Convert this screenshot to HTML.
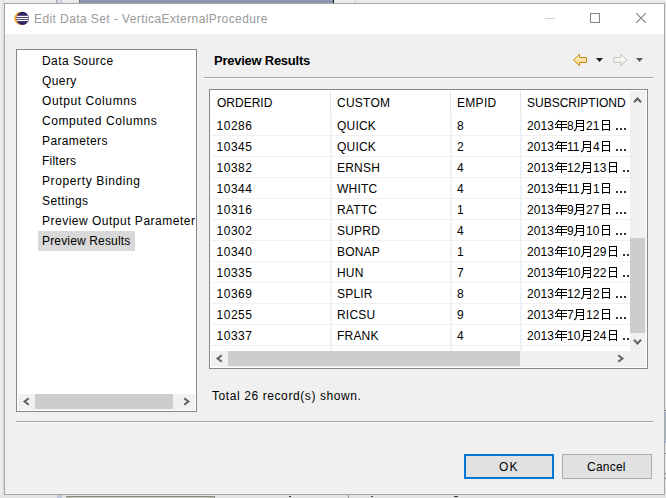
<!DOCTYPE html>
<html><head><meta charset="utf-8">
<style>
*{margin:0;padding:0;box-sizing:border-box}
html,body{width:666px;height:498px;overflow:hidden;background:#e9e9e9;font-family:"Liberation Sans",sans-serif;font-size:12px;color:#000}
.a{position:absolute}
.t{position:absolute;white-space:pre;line-height:14px;font-size:12px;color:#000}
svg{position:absolute;overflow:visible}
</style></head><body>
<div class="a" style="left:0px;top:0px;width:666px;height:3px;background:#eaeaea;"></div>
<div class="a" style="left:56px;top:0px;width:6px;height:3px;background:#d2dae8;border-left:1px solid #a8a8a8;border-right:1px solid #c8c8c8;"></div>
<div class="a" style="left:79px;top:0px;width:254px;height:3px;background:#8b97b3;border-left:1px solid #777;"></div>
<div class="a" style="left:333px;top:0px;width:1px;height:3px;background:#111;"></div>
<div class="a" style="left:355px;top:0px;width:1px;height:3px;background:#b8cde0;"></div>
<div class="a" style="left:0px;top:0px;width:4px;height:498px;background:linear-gradient(to right,#f2f2f2,#dcdcdc);"></div>
<div class="a" style="left:665px;top:0px;width:1px;height:498px;background:#e6e6e6;"></div>
<div class="a" style="left:665px;top:410px;width:1px;height:1px;background:#666;"></div>
<div class="a" style="left:665px;top:412px;width:1px;height:31px;background:#aab4c8;"></div>
<div class="a" style="left:665px;top:453px;width:1px;height:1px;background:#777;"></div>
<div class="a" style="left:665px;top:473px;width:1px;height:1px;background:#777;"></div>
<div class="a" style="left:665px;top:478px;width:1px;height:1px;background:#777;"></div>
<div class="a" style="left:0px;top:495px;width:666px;height:3px;background:#e4e4e4;"></div>
<div class="a" style="left:57px;top:495px;width:5px;height:3px;background:#c0c8dc;"></div>
<div class="a" style="left:66px;top:496px;width:149px;height:2px;background:#c4c4b6;border-top:1px solid #8a8a8a;border-right:1px solid #8a8a8a;"></div>
<div class="a" style="left:289px;top:496px;width:2px;height:1px;background:#333;"></div>
<div class="a" style="left:348px;top:495px;width:1px;height:3px;background:#999;"></div>
<div class="a" style="left:371px;top:496px;width:2px;height:1px;background:#444;"></div>
<div class="a" style="left:454px;top:496px;width:4px;height:1px;background:#333;"></div>
<div class="a" style="left:4px;top:3px;width:661px;height:492px;background:#f0f0f0;border:1px solid #a6a6a6;"></div>
<div class="a" style="left:5px;top:4px;width:659px;height:30px;background:#ffffff;"></div>
<svg style="left:14px;top:11px" width="16" height="15" viewBox="0 0 16 15">
<ellipse cx="7.2" cy="7.4" rx="6.9" ry="6.6" fill="#f7a12a"/>
<ellipse cx="8.6" cy="7.4" rx="6.3" ry="6.6" fill="#2f2461"/>
<rect x="2.6" y="4.8" width="11.6" height="1.2" fill="#fff"/>
<rect x="2.4" y="6.9" width="12.2" height="1.2" fill="#fff"/>
<rect x="2.6" y="8.9" width="11.6" height="1.2" fill="#fff"/>
</svg>
<div class="t" style="left:34px;top:12px;color:#999;letter-spacing:0.41px">Edit Data Set - VerticaExternalProcedure</div>
<div class="a" style="left:545px;top:18px;width:10px;height:1px;background:#cfcfcf;"></div>
<div class="a" style="left:590px;top:13px;width:10px;height:10px;background:transparent;border:1px solid #858585;"></div>
<svg style="left:636px;top:13px" width="10" height="10" viewBox="0 0 10 10"><path d="M0.2 0.2L9.8 9.8M9.8 0.2L0.2 9.8" stroke="#808080" stroke-width="1.1" fill="none"/></svg>
<div class="a" style="left:16px;top:49px;width:181px;height:363px;background:#fff;border:1px solid #828790;"></div>
<div class="a" style="left:38px;top:231px;width:97px;height:20px;background:#d9d9d9;"></div>
<div class="a" style="left:17px;top:50px;width:178px;height:344px;overflow:hidden">
<div class="t" style="left:25px;top:4px;letter-spacing:0.44px">Data Source</div>
<div class="t" style="left:25px;top:24px;letter-spacing:0.4px">Query</div>
<div class="t" style="left:25px;top:44px;letter-spacing:0.6px">Output Columns</div>
<div class="t" style="left:25px;top:64px;letter-spacing:0.58px">Computed Columns</div>
<div class="t" style="left:25px;top:84px;letter-spacing:0.38px">Parameters</div>
<div class="t" style="left:25px;top:104px;letter-spacing:0.23px">Filters</div>
<div class="t" style="left:25px;top:124px;letter-spacing:0.62px">Property Binding</div>
<div class="t" style="left:25px;top:144px;letter-spacing:0.39px">Settings</div>
<div class="t" style="left:25px;top:164px;letter-spacing:0.5px">Preview Output Parameters</div>
<div class="t" style="left:25px;top:184px;letter-spacing:0.16px">Preview Results</div>
</div>
<div class="a" style="left:18px;top:394px;width:177px;height:16px;background:#f0f0f0;"></div>
<div class="a" style="left:35px;top:394px;width:138px;height:15px;background:#cdcdcd;"></div>
<svg style="left:22px;top:397px" width="9" height="9" viewBox="0 0 9 9"><path d="M6.8 1.3L2.6 4.5L6.8 7.7" stroke="#606060" stroke-width="2" fill="none"/></svg>
<svg style="left:183px;top:397px" width="9" height="9" viewBox="0 0 9 9"><path d="M1.2 1.3L5.4 4.5L1.2 7.7" stroke="#606060" stroke-width="2" fill="none"/></svg>
<div class="t" style="left:214px;top:54px;font-weight:bold;font-size:13px;letter-spacing:-0.25px">Preview Results</div>
<div class="a" style="left:204px;top:77px;width:449px;height:1px;background:#a0a0a0;"></div>
<div class="a" style="left:204px;top:78px;width:449px;height:1px;background:#ffffff;"></div>
<svg style="left:572px;top:53px" width="17" height="14" viewBox="0 0 17 14">
<defs><linearGradient id="gy" x1="0" y1="0" x2="0" y2="1"><stop offset="0" stop-color="#fff8dc"/><stop offset="1" stop-color="#f3cf6e"/></linearGradient></defs>
<path d="M1.5 7L7.5 1.3V4.5H14.6V9.5H7.5V12.7Z" fill="url(#gy)" stroke="#c28a1a" stroke-width="1" stroke-linejoin="round"/>
</svg>
<svg style="left:596px;top:58px" width="8" height="5" viewBox="0 0 8 5"><path d="M0 0H7L3.5 4Z" fill="#1e1e1e"/></svg>
<svg style="left:612px;top:53px" width="17" height="14" viewBox="0 0 17 14">
<defs><linearGradient id="gg" x1="0" y1="0" x2="0" y2="1"><stop offset="0" stop-color="#ffffff"/><stop offset="1" stop-color="#e8e8de"/></linearGradient></defs>
<path d="M15 7L9 1.3V4.5H1.9V9.5H9V12.7Z" fill="url(#gg)" stroke="#c4c4ba" stroke-width="1" stroke-linejoin="round"/>
</svg>
<svg style="left:636px;top:58px" width="8" height="5" viewBox="0 0 8 5"><path d="M0 0H7L3.5 4Z" fill="#5a5a5a"/></svg>
<div class="a" style="left:209px;top:89px;width:439px;height:280px;background:#fff;border:1px solid #828790;"></div>
<div class="a" style="left:330px;top:91px;width:1px;height:24px;background:#e5e5e5;"></div>
<div class="a" style="left:450px;top:91px;width:1px;height:24px;background:#e5e5e5;"></div>
<div class="a" style="left:520px;top:91px;width:1px;height:24px;background:#e5e5e5;"></div>
<div class="t" style="left:217px;top:96px;letter-spacing:0px">ORDERID</div>
<div class="t" style="left:337px;top:96px;letter-spacing:0.24px">CUSTOM</div>
<div class="t" style="left:457px;top:96px;letter-spacing:0.3px">EMPID</div>
<div class="t" style="left:527px;top:96px;letter-spacing:0px">SUBSCRIPTIOND</div>
<div class="a" style="left:211px;top:115px;width:419px;height:236px;overflow:hidden">
<div class="a" style="left:0;top:20px;width:419px;height:1px;background:#f0f0f0"></div>
<div class="a" style="left:0;top:41px;width:419px;height:1px;background:#f0f0f0"></div>
<div class="a" style="left:0;top:62px;width:419px;height:1px;background:#f0f0f0"></div>
<div class="a" style="left:0;top:83px;width:419px;height:1px;background:#f0f0f0"></div>
<div class="a" style="left:0;top:104px;width:419px;height:1px;background:#f0f0f0"></div>
<div class="a" style="left:0;top:125px;width:419px;height:1px;background:#f0f0f0"></div>
<div class="a" style="left:0;top:146px;width:419px;height:1px;background:#f0f0f0"></div>
<div class="a" style="left:0;top:167px;width:419px;height:1px;background:#f0f0f0"></div>
<div class="a" style="left:0;top:188px;width:419px;height:1px;background:#f0f0f0"></div>
<div class="a" style="left:0;top:209px;width:419px;height:1px;background:#f0f0f0"></div>
<div class="a" style="left:0;top:230px;width:419px;height:1px;background:#f0f0f0"></div>
<div class="a" style="left:0;top:251px;width:419px;height:1px;background:#f0f0f0"></div>
<div class="a" style="left:119px;top:0;width:1px;height:236px;background:#ecf2fb"></div>
<div class="a" style="left:120px;top:0;width:1px;height:236px;background:#f1f1f1"></div>
<div class="a" style="left:239px;top:0;width:1px;height:236px;background:#ecf2fb"></div>
<div class="a" style="left:240px;top:0;width:1px;height:236px;background:#f1f1f1"></div>
<div class="a" style="left:309px;top:0;width:1px;height:236px;background:#ecf2fb"></div>
<div class="a" style="left:310px;top:0;width:1px;height:236px;background:#f1f1f1"></div>
<div class="t" style="left:5.6px;top:4px;letter-spacing:0.5px">10286</div>
<div class="t" style="left:126px;top:4px;letter-spacing:0.2px">QUICK</div>
<div class="t" style="left:246px;top:4px">8</div>
<div class="a" style="left:309px;top:0;width:110px;height:236px;overflow:hidden">
<div class="t" style="left:7px;top:4px;letter-spacing:0.1px">2013</div>
<svg style="left:33px;top:4px" width="15" height="13" viewBox="0 0 15 13"><path d="M5 2.5H14M4 5.5H14M4.5 5V9M2 8.5H14M8.5 2V12" stroke="#000" stroke-width="1" fill="none" shape-rendering="crispEdges"/><path d="M5.9 1L2.3 5.9" stroke="#000" stroke-width="1.1" fill="none"/></svg>
<div class="t" style="left:47px;top:4px">8</div>
<svg style="left:53px;top:4px" width="15" height="13" viewBox="0 0 15 13"><path d="M3 1.5H11M10.5 1V12M7 11.5H11M3 4.5H11M3 7.5H11" stroke="#000" stroke-width="1" fill="none" shape-rendering="crispEdges"/><path d="M3.5 1V8Q3.5 10.5 1 12" stroke="#000" stroke-width="1.1" fill="none"/></svg>
<div class="t" style="left:66px;top:4px">21</div>
<svg style="left:79px;top:4px" width="15" height="13" viewBox="0 0 15 13"><path d="M3.5 1V12M10.5 1V12M3 1.5H11M3 5.5H11M3 10.5H11" stroke="#000" stroke-width="1" fill="none" shape-rendering="crispEdges"/></svg>
<div class="a" style="left:96px;top:13px;width:2px;height:2px;background:#333"></div>
<div class="a" style="left:100px;top:13px;width:2px;height:2px;background:#333"></div>
<div class="a" style="left:104px;top:13px;width:2px;height:2px;background:#333"></div>
</div>
<div class="t" style="left:5.6px;top:25px;letter-spacing:0.5px">10345</div>
<div class="t" style="left:126px;top:25px;letter-spacing:0.2px">QUICK</div>
<div class="t" style="left:246px;top:25px">2</div>
<div class="a" style="left:309px;top:0;width:110px;height:236px;overflow:hidden">
<div class="t" style="left:7px;top:25px;letter-spacing:0.1px">2013</div>
<svg style="left:33px;top:25px" width="15" height="13" viewBox="0 0 15 13"><path d="M5 2.5H14M4 5.5H14M4.5 5V9M2 8.5H14M8.5 2V12" stroke="#000" stroke-width="1" fill="none" shape-rendering="crispEdges"/><path d="M5.9 1L2.3 5.9" stroke="#000" stroke-width="1.1" fill="none"/></svg>
<div class="t" style="left:47px;top:25px">11</div>
<svg style="left:60px;top:25px" width="15" height="13" viewBox="0 0 15 13"><path d="M3 1.5H11M10.5 1V12M7 11.5H11M3 4.5H11M3 7.5H11" stroke="#000" stroke-width="1" fill="none" shape-rendering="crispEdges"/><path d="M3.5 1V8Q3.5 10.5 1 12" stroke="#000" stroke-width="1.1" fill="none"/></svg>
<div class="t" style="left:73px;top:25px">4</div>
<svg style="left:79px;top:25px" width="15" height="13" viewBox="0 0 15 13"><path d="M3.5 1V12M10.5 1V12M3 1.5H11M3 5.5H11M3 10.5H11" stroke="#000" stroke-width="1" fill="none" shape-rendering="crispEdges"/></svg>
<div class="a" style="left:96px;top:34px;width:2px;height:2px;background:#333"></div>
<div class="a" style="left:100px;top:34px;width:2px;height:2px;background:#333"></div>
<div class="a" style="left:104px;top:34px;width:2px;height:2px;background:#333"></div>
</div>
<div class="t" style="left:5.6px;top:46px;letter-spacing:0.5px">10382</div>
<div class="t" style="left:126px;top:46px;letter-spacing:0.2px">ERNSH</div>
<div class="t" style="left:246px;top:46px">4</div>
<div class="a" style="left:309px;top:0;width:110px;height:236px;overflow:hidden">
<div class="t" style="left:7px;top:46px;letter-spacing:0.1px">2013</div>
<svg style="left:33px;top:46px" width="15" height="13" viewBox="0 0 15 13"><path d="M5 2.5H14M4 5.5H14M4.5 5V9M2 8.5H14M8.5 2V12" stroke="#000" stroke-width="1" fill="none" shape-rendering="crispEdges"/><path d="M5.9 1L2.3 5.9" stroke="#000" stroke-width="1.1" fill="none"/></svg>
<div class="t" style="left:47px;top:46px">12</div>
<svg style="left:60px;top:46px" width="15" height="13" viewBox="0 0 15 13"><path d="M3 1.5H11M10.5 1V12M7 11.5H11M3 4.5H11M3 7.5H11" stroke="#000" stroke-width="1" fill="none" shape-rendering="crispEdges"/><path d="M3.5 1V8Q3.5 10.5 1 12" stroke="#000" stroke-width="1.1" fill="none"/></svg>
<div class="t" style="left:73px;top:46px">13</div>
<svg style="left:86px;top:46px" width="15" height="13" viewBox="0 0 15 13"><path d="M3.5 1V12M10.5 1V12M3 1.5H11M3 5.5H11M3 10.5H11" stroke="#000" stroke-width="1" fill="none" shape-rendering="crispEdges"/></svg>
<div class="a" style="left:103px;top:55px;width:2px;height:2px;background:#333"></div>
<div class="a" style="left:107px;top:55px;width:2px;height:2px;background:#333"></div>
<div class="a" style="left:110px;top:55px;width:2px;height:2px;background:#333"></div>
</div>
<div class="t" style="left:5.6px;top:67px;letter-spacing:0.5px">10344</div>
<div class="t" style="left:126px;top:67px;letter-spacing:0.2px">WHITC</div>
<div class="t" style="left:246px;top:67px">4</div>
<div class="a" style="left:309px;top:0;width:110px;height:236px;overflow:hidden">
<div class="t" style="left:7px;top:67px;letter-spacing:0.1px">2013</div>
<svg style="left:33px;top:67px" width="15" height="13" viewBox="0 0 15 13"><path d="M5 2.5H14M4 5.5H14M4.5 5V9M2 8.5H14M8.5 2V12" stroke="#000" stroke-width="1" fill="none" shape-rendering="crispEdges"/><path d="M5.9 1L2.3 5.9" stroke="#000" stroke-width="1.1" fill="none"/></svg>
<div class="t" style="left:47px;top:67px">11</div>
<svg style="left:60px;top:67px" width="15" height="13" viewBox="0 0 15 13"><path d="M3 1.5H11M10.5 1V12M7 11.5H11M3 4.5H11M3 7.5H11" stroke="#000" stroke-width="1" fill="none" shape-rendering="crispEdges"/><path d="M3.5 1V8Q3.5 10.5 1 12" stroke="#000" stroke-width="1.1" fill="none"/></svg>
<div class="t" style="left:73px;top:67px">1</div>
<svg style="left:79px;top:67px" width="15" height="13" viewBox="0 0 15 13"><path d="M3.5 1V12M10.5 1V12M3 1.5H11M3 5.5H11M3 10.5H11" stroke="#000" stroke-width="1" fill="none" shape-rendering="crispEdges"/></svg>
<div class="a" style="left:96px;top:76px;width:2px;height:2px;background:#333"></div>
<div class="a" style="left:100px;top:76px;width:2px;height:2px;background:#333"></div>
<div class="a" style="left:104px;top:76px;width:2px;height:2px;background:#333"></div>
</div>
<div class="t" style="left:5.6px;top:88px;letter-spacing:0.5px">10316</div>
<div class="t" style="left:126px;top:88px;letter-spacing:0.2px">RATTC</div>
<div class="t" style="left:246px;top:88px">1</div>
<div class="a" style="left:309px;top:0;width:110px;height:236px;overflow:hidden">
<div class="t" style="left:7px;top:88px;letter-spacing:0.1px">2013</div>
<svg style="left:33px;top:88px" width="15" height="13" viewBox="0 0 15 13"><path d="M5 2.5H14M4 5.5H14M4.5 5V9M2 8.5H14M8.5 2V12" stroke="#000" stroke-width="1" fill="none" shape-rendering="crispEdges"/><path d="M5.9 1L2.3 5.9" stroke="#000" stroke-width="1.1" fill="none"/></svg>
<div class="t" style="left:47px;top:88px">9</div>
<svg style="left:53px;top:88px" width="15" height="13" viewBox="0 0 15 13"><path d="M3 1.5H11M10.5 1V12M7 11.5H11M3 4.5H11M3 7.5H11" stroke="#000" stroke-width="1" fill="none" shape-rendering="crispEdges"/><path d="M3.5 1V8Q3.5 10.5 1 12" stroke="#000" stroke-width="1.1" fill="none"/></svg>
<div class="t" style="left:66px;top:88px">27</div>
<svg style="left:79px;top:88px" width="15" height="13" viewBox="0 0 15 13"><path d="M3.5 1V12M10.5 1V12M3 1.5H11M3 5.5H11M3 10.5H11" stroke="#000" stroke-width="1" fill="none" shape-rendering="crispEdges"/></svg>
<div class="a" style="left:96px;top:97px;width:2px;height:2px;background:#333"></div>
<div class="a" style="left:100px;top:97px;width:2px;height:2px;background:#333"></div>
<div class="a" style="left:104px;top:97px;width:2px;height:2px;background:#333"></div>
</div>
<div class="t" style="left:5.6px;top:109px;letter-spacing:0.5px">10302</div>
<div class="t" style="left:126px;top:109px;letter-spacing:0.2px">SUPRD</div>
<div class="t" style="left:246px;top:109px">4</div>
<div class="a" style="left:309px;top:0;width:110px;height:236px;overflow:hidden">
<div class="t" style="left:7px;top:109px;letter-spacing:0.1px">2013</div>
<svg style="left:33px;top:109px" width="15" height="13" viewBox="0 0 15 13"><path d="M5 2.5H14M4 5.5H14M4.5 5V9M2 8.5H14M8.5 2V12" stroke="#000" stroke-width="1" fill="none" shape-rendering="crispEdges"/><path d="M5.9 1L2.3 5.9" stroke="#000" stroke-width="1.1" fill="none"/></svg>
<div class="t" style="left:47px;top:109px">9</div>
<svg style="left:53px;top:109px" width="15" height="13" viewBox="0 0 15 13"><path d="M3 1.5H11M10.5 1V12M7 11.5H11M3 4.5H11M3 7.5H11" stroke="#000" stroke-width="1" fill="none" shape-rendering="crispEdges"/><path d="M3.5 1V8Q3.5 10.5 1 12" stroke="#000" stroke-width="1.1" fill="none"/></svg>
<div class="t" style="left:66px;top:109px">10</div>
<svg style="left:79px;top:109px" width="15" height="13" viewBox="0 0 15 13"><path d="M3.5 1V12M10.5 1V12M3 1.5H11M3 5.5H11M3 10.5H11" stroke="#000" stroke-width="1" fill="none" shape-rendering="crispEdges"/></svg>
<div class="a" style="left:96px;top:118px;width:2px;height:2px;background:#333"></div>
<div class="a" style="left:100px;top:118px;width:2px;height:2px;background:#333"></div>
<div class="a" style="left:104px;top:118px;width:2px;height:2px;background:#333"></div>
</div>
<div class="t" style="left:5.6px;top:130px;letter-spacing:0.5px">10340</div>
<div class="t" style="left:126px;top:130px;letter-spacing:0.2px">BONAP</div>
<div class="t" style="left:246px;top:130px">1</div>
<div class="a" style="left:309px;top:0;width:110px;height:236px;overflow:hidden">
<div class="t" style="left:7px;top:130px;letter-spacing:0.1px">2013</div>
<svg style="left:33px;top:130px" width="15" height="13" viewBox="0 0 15 13"><path d="M5 2.5H14M4 5.5H14M4.5 5V9M2 8.5H14M8.5 2V12" stroke="#000" stroke-width="1" fill="none" shape-rendering="crispEdges"/><path d="M5.9 1L2.3 5.9" stroke="#000" stroke-width="1.1" fill="none"/></svg>
<div class="t" style="left:47px;top:130px">10</div>
<svg style="left:60px;top:130px" width="15" height="13" viewBox="0 0 15 13"><path d="M3 1.5H11M10.5 1V12M7 11.5H11M3 4.5H11M3 7.5H11" stroke="#000" stroke-width="1" fill="none" shape-rendering="crispEdges"/><path d="M3.5 1V8Q3.5 10.5 1 12" stroke="#000" stroke-width="1.1" fill="none"/></svg>
<div class="t" style="left:73px;top:130px">29</div>
<svg style="left:86px;top:130px" width="15" height="13" viewBox="0 0 15 13"><path d="M3.5 1V12M10.5 1V12M3 1.5H11M3 5.5H11M3 10.5H11" stroke="#000" stroke-width="1" fill="none" shape-rendering="crispEdges"/></svg>
<div class="a" style="left:103px;top:139px;width:2px;height:2px;background:#333"></div>
<div class="a" style="left:107px;top:139px;width:2px;height:2px;background:#333"></div>
<div class="a" style="left:110px;top:139px;width:2px;height:2px;background:#333"></div>
</div>
<div class="t" style="left:5.6px;top:151px;letter-spacing:0.5px">10335</div>
<div class="t" style="left:126px;top:151px;letter-spacing:0.2px">HUN</div>
<div class="t" style="left:246px;top:151px">7</div>
<div class="a" style="left:309px;top:0;width:110px;height:236px;overflow:hidden">
<div class="t" style="left:7px;top:151px;letter-spacing:0.1px">2013</div>
<svg style="left:33px;top:151px" width="15" height="13" viewBox="0 0 15 13"><path d="M5 2.5H14M4 5.5H14M4.5 5V9M2 8.5H14M8.5 2V12" stroke="#000" stroke-width="1" fill="none" shape-rendering="crispEdges"/><path d="M5.9 1L2.3 5.9" stroke="#000" stroke-width="1.1" fill="none"/></svg>
<div class="t" style="left:47px;top:151px">10</div>
<svg style="left:60px;top:151px" width="15" height="13" viewBox="0 0 15 13"><path d="M3 1.5H11M10.5 1V12M7 11.5H11M3 4.5H11M3 7.5H11" stroke="#000" stroke-width="1" fill="none" shape-rendering="crispEdges"/><path d="M3.5 1V8Q3.5 10.5 1 12" stroke="#000" stroke-width="1.1" fill="none"/></svg>
<div class="t" style="left:73px;top:151px">22</div>
<svg style="left:86px;top:151px" width="15" height="13" viewBox="0 0 15 13"><path d="M3.5 1V12M10.5 1V12M3 1.5H11M3 5.5H11M3 10.5H11" stroke="#000" stroke-width="1" fill="none" shape-rendering="crispEdges"/></svg>
<div class="a" style="left:103px;top:160px;width:2px;height:2px;background:#333"></div>
<div class="a" style="left:107px;top:160px;width:2px;height:2px;background:#333"></div>
<div class="a" style="left:110px;top:160px;width:2px;height:2px;background:#333"></div>
</div>
<div class="t" style="left:5.6px;top:172px;letter-spacing:0.5px">10369</div>
<div class="t" style="left:126px;top:172px;letter-spacing:0.2px">SPLIR</div>
<div class="t" style="left:246px;top:172px">8</div>
<div class="a" style="left:309px;top:0;width:110px;height:236px;overflow:hidden">
<div class="t" style="left:7px;top:172px;letter-spacing:0.1px">2013</div>
<svg style="left:33px;top:172px" width="15" height="13" viewBox="0 0 15 13"><path d="M5 2.5H14M4 5.5H14M4.5 5V9M2 8.5H14M8.5 2V12" stroke="#000" stroke-width="1" fill="none" shape-rendering="crispEdges"/><path d="M5.9 1L2.3 5.9" stroke="#000" stroke-width="1.1" fill="none"/></svg>
<div class="t" style="left:47px;top:172px">12</div>
<svg style="left:60px;top:172px" width="15" height="13" viewBox="0 0 15 13"><path d="M3 1.5H11M10.5 1V12M7 11.5H11M3 4.5H11M3 7.5H11" stroke="#000" stroke-width="1" fill="none" shape-rendering="crispEdges"/><path d="M3.5 1V8Q3.5 10.5 1 12" stroke="#000" stroke-width="1.1" fill="none"/></svg>
<div class="t" style="left:73px;top:172px">2</div>
<svg style="left:79px;top:172px" width="15" height="13" viewBox="0 0 15 13"><path d="M3.5 1V12M10.5 1V12M3 1.5H11M3 5.5H11M3 10.5H11" stroke="#000" stroke-width="1" fill="none" shape-rendering="crispEdges"/></svg>
<div class="a" style="left:96px;top:181px;width:2px;height:2px;background:#333"></div>
<div class="a" style="left:100px;top:181px;width:2px;height:2px;background:#333"></div>
<div class="a" style="left:104px;top:181px;width:2px;height:2px;background:#333"></div>
</div>
<div class="t" style="left:5.6px;top:193px;letter-spacing:0.5px">10255</div>
<div class="t" style="left:126px;top:193px;letter-spacing:0.2px">RICSU</div>
<div class="t" style="left:246px;top:193px">9</div>
<div class="a" style="left:309px;top:0;width:110px;height:236px;overflow:hidden">
<div class="t" style="left:7px;top:193px;letter-spacing:0.1px">2013</div>
<svg style="left:33px;top:193px" width="15" height="13" viewBox="0 0 15 13"><path d="M5 2.5H14M4 5.5H14M4.5 5V9M2 8.5H14M8.5 2V12" stroke="#000" stroke-width="1" fill="none" shape-rendering="crispEdges"/><path d="M5.9 1L2.3 5.9" stroke="#000" stroke-width="1.1" fill="none"/></svg>
<div class="t" style="left:47px;top:193px">7</div>
<svg style="left:53px;top:193px" width="15" height="13" viewBox="0 0 15 13"><path d="M3 1.5H11M10.5 1V12M7 11.5H11M3 4.5H11M3 7.5H11" stroke="#000" stroke-width="1" fill="none" shape-rendering="crispEdges"/><path d="M3.5 1V8Q3.5 10.5 1 12" stroke="#000" stroke-width="1.1" fill="none"/></svg>
<div class="t" style="left:66px;top:193px">12</div>
<svg style="left:79px;top:193px" width="15" height="13" viewBox="0 0 15 13"><path d="M3.5 1V12M10.5 1V12M3 1.5H11M3 5.5H11M3 10.5H11" stroke="#000" stroke-width="1" fill="none" shape-rendering="crispEdges"/></svg>
<div class="a" style="left:96px;top:202px;width:2px;height:2px;background:#333"></div>
<div class="a" style="left:100px;top:202px;width:2px;height:2px;background:#333"></div>
<div class="a" style="left:104px;top:202px;width:2px;height:2px;background:#333"></div>
</div>
<div class="t" style="left:5.6px;top:214px;letter-spacing:0.5px">10337</div>
<div class="t" style="left:126px;top:214px;letter-spacing:0.2px">FRANK</div>
<div class="t" style="left:246px;top:214px">4</div>
<div class="a" style="left:309px;top:0;width:110px;height:236px;overflow:hidden">
<div class="t" style="left:7px;top:214px;letter-spacing:0.1px">2013</div>
<svg style="left:33px;top:214px" width="15" height="13" viewBox="0 0 15 13"><path d="M5 2.5H14M4 5.5H14M4.5 5V9M2 8.5H14M8.5 2V12" stroke="#000" stroke-width="1" fill="none" shape-rendering="crispEdges"/><path d="M5.9 1L2.3 5.9" stroke="#000" stroke-width="1.1" fill="none"/></svg>
<div class="t" style="left:47px;top:214px">10</div>
<svg style="left:60px;top:214px" width="15" height="13" viewBox="0 0 15 13"><path d="M3 1.5H11M10.5 1V12M7 11.5H11M3 4.5H11M3 7.5H11" stroke="#000" stroke-width="1" fill="none" shape-rendering="crispEdges"/><path d="M3.5 1V8Q3.5 10.5 1 12" stroke="#000" stroke-width="1.1" fill="none"/></svg>
<div class="t" style="left:73px;top:214px">24</div>
<svg style="left:86px;top:214px" width="15" height="13" viewBox="0 0 15 13"><path d="M3.5 1V12M10.5 1V12M3 1.5H11M3 5.5H11M3 10.5H11" stroke="#000" stroke-width="1" fill="none" shape-rendering="crispEdges"/></svg>
<div class="a" style="left:103px;top:223px;width:2px;height:2px;background:#333"></div>
<div class="a" style="left:107px;top:223px;width:2px;height:2px;background:#333"></div>
<div class="a" style="left:110px;top:223px;width:2px;height:2px;background:#333"></div>
</div>
</div>
<div class="a" style="left:630px;top:91px;width:16px;height:260px;background:#f0f0f0;"></div>
<div class="a" style="left:630px;top:238px;width:15px;height:95px;background:#cdcdcd;"></div>
<svg style="left:633px;top:96px" width="9" height="9" viewBox="0 0 9 9"><path d="M1 6.3L4.5 2.5L8 6.3" stroke="#606060" stroke-width="2" fill="none"/></svg>
<svg style="left:633px;top:338px" width="9" height="9" viewBox="0 0 9 9"><path d="M1 1.7L4.5 5.5L8 1.7" stroke="#606060" stroke-width="2" fill="none"/></svg>
<div class="a" style="left:211px;top:351px;width:435px;height:16px;background:#f0f0f0;"></div>
<div class="a" style="left:228px;top:351px;width:292px;height:15px;background:#cdcdcd;"></div>
<svg style="left:215px;top:354px" width="9" height="9" viewBox="0 0 9 9"><path d="M6.8 1.3L2.6 4.5L6.8 7.7" stroke="#606060" stroke-width="2" fill="none"/></svg>
<svg style="left:617px;top:354px" width="9" height="9" viewBox="0 0 9 9"><path d="M1.2 1.3L5.4 4.5L1.2 7.7" stroke="#606060" stroke-width="2" fill="none"/></svg>
<div class="t" style="left:212px;top:389px;letter-spacing:0.59px">Total 26 record(s) shown.</div>
<div class="a" style="left:16px;top:421px;width:637px;height:1px;background:#a0a0a0;"></div>
<div class="a" style="left:16px;top:422px;width:637px;height:1px;background:#ffffff;"></div>
<div class="a" style="left:464px;top:454px;width:90px;height:25px;border:2px solid #0078d7;background:#e1e1e1"></div>
<div class="a" style="left:562px;top:454px;width:90px;height:25px;border:1px solid #adadad;background:#e1e1e1"></div>
<div class="t" style="left:499px;top:460px;letter-spacing:1.2px">OK</div>
<div class="t" style="left:587px;top:460px;letter-spacing:0.22px">Cancel</div>
</body></html>
